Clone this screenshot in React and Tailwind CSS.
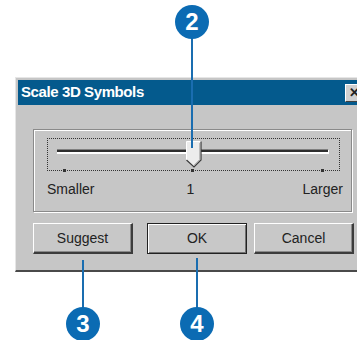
import React from 'react';

const sans = { fontFamily: '"Liberation Sans", Arial, sans-serif' };

// Numbered callout bubble used by the guide
function Callout({ n, className }) {
  return (
    <div
      className={`absolute w-[34px] h-[34px] rounded-full bg-[#0b6bb3] text-white font-bold text-[24px] leading-none flex items-center justify-center ${className}`}
      style={sans}
    >
      {n}
    </div>
  );
}

function Thumb() {
  return (
    <svg width="16" height="27" viewBox="0 0 16 27" className="absolute left-[138px] top-[2px]">
      <path d="M0.5 0.5 H15 V19 L8 26 L0.5 19 Z" fill="#ececec" />
      <path d="M0.5 19 V0.5 H15" fill="none" stroke="#fff" strokeWidth="1" />
      <path d="M15 0.5 V19 L8 26 L0.5 19" fill="none" stroke="#3a3a3a" strokeWidth="1.2" />
      <path d="M14 2 V18.5 L8 24.5" fill="none" stroke="#8a8a8a" strokeWidth="1" />
    </svg>
  );
}

function Button({ children, primary, className = '' }) {
  return (
    <div
      className={`w-[100px] h-[31px] flex items-center justify-center text-[14px] text-[#222] bg-[#c8c8c8] ${
        primary
          ? 'border border-[#222] shadow-[inset_1px_1px_0_#fff,inset_-1px_-1px_0_#707070]'
          : 'border-t border-l border-t-white border-l-white border-b-2 border-r-2 border-b-[#3c3c3c] border-r-[#3c3c3c] shadow-[inset_-1px_-1px_0_#8a8a8a]'
      } ${className}`}
      style={sans}
    >
      {children}
    </div>
  );
}

export default function App() {
  return (
    <div className="relative w-[357px] h-[340px] bg-white overflow-hidden">
      <div className="ml-[15px] mt-[77px] w-[348px] h-[195px] bg-[#c6c6c6] border-l border-t border-[#e6e6e6] border-b-2 border-b-[#4a4a4a] pt-[2px] pl-[2px]">
        <div className="h-[25px] bg-[#045a8d] flex items-center pl-[3px]">
          <span className="text-white font-bold text-[15px] tracking-[-0.4px]" style={sans}>
            Scale 3D Symbols
          </span>
          <div className="ml-auto w-[18px] h-[18px] bg-[#d0d0d0] border-t border-l border-white border-b border-r border-b-[#404040] border-r-[#404040] flex items-center justify-center text-[13px] font-bold text-[#222] leading-none" style={sans}>
            ✕
          </div>
        </div>

        <div className="ml-[15px] mt-[24px] w-[319px] h-[83px] border border-[#8a8a8a] shadow-[inset_1px_1px_0_#fff,1px_1px_0_#fff]">
          <div className="relative ml-[13px] mt-[8px] w-[293px] h-[33px] border border-dotted border-[#333] pt-[10px] pl-[9px]">
            <div className="w-[272px] h-[5px] border-t border-[#808080] bg-[#2e2e2e] border-b-2 border-b-white border-r border-r-white" />
            <Thumb />
            <div className="absolute left-[15px] bottom-[-2px] w-[3px] h-[3px] bg-[#333]" />
            <div className="absolute left-[143px] bottom-[-2px] w-[3px] h-[3px] bg-[#333]" />
            <div className="absolute left-[273px] bottom-[-2px] w-[3px] h-[3px] bg-[#333]" />
          </div>
          <div className="ml-[13px] mt-[8px] w-[296px] flex items-center text-[14px] text-[#222]" style={sans}>
            <span>Smaller</span>
            <span className="ml-[92px]">1</span>
            <span className="ml-auto">Larger</span>
          </div>
        </div>

        <div className="flex ml-[15px] mt-[11px]">
          <Button>Suggest</Button>
          <Button primary className="ml-[14px]">OK</Button>
          <Button className="ml-[7px]">Cancel</Button>
        </div>
      </div>

      <div className="absolute left-[191px] top-[36px] w-[2px] h-[112px] bg-[#1a6db0]" />
      <Callout n="2" className="left-[175px] top-[5px]" />

      <div className="absolute left-[82px] top-[260px] w-[2px] h-[50px] bg-[#1a6db0]" />
      <Callout n="3" className="left-[66px] top-[307px]" />

      <div className="absolute left-[196px] top-[258px] w-[2px] h-[52px] bg-[#1a6db0]" />
      <Callout n="4" className="left-[180px] top-[307px]" />
    </div>
  );
}
